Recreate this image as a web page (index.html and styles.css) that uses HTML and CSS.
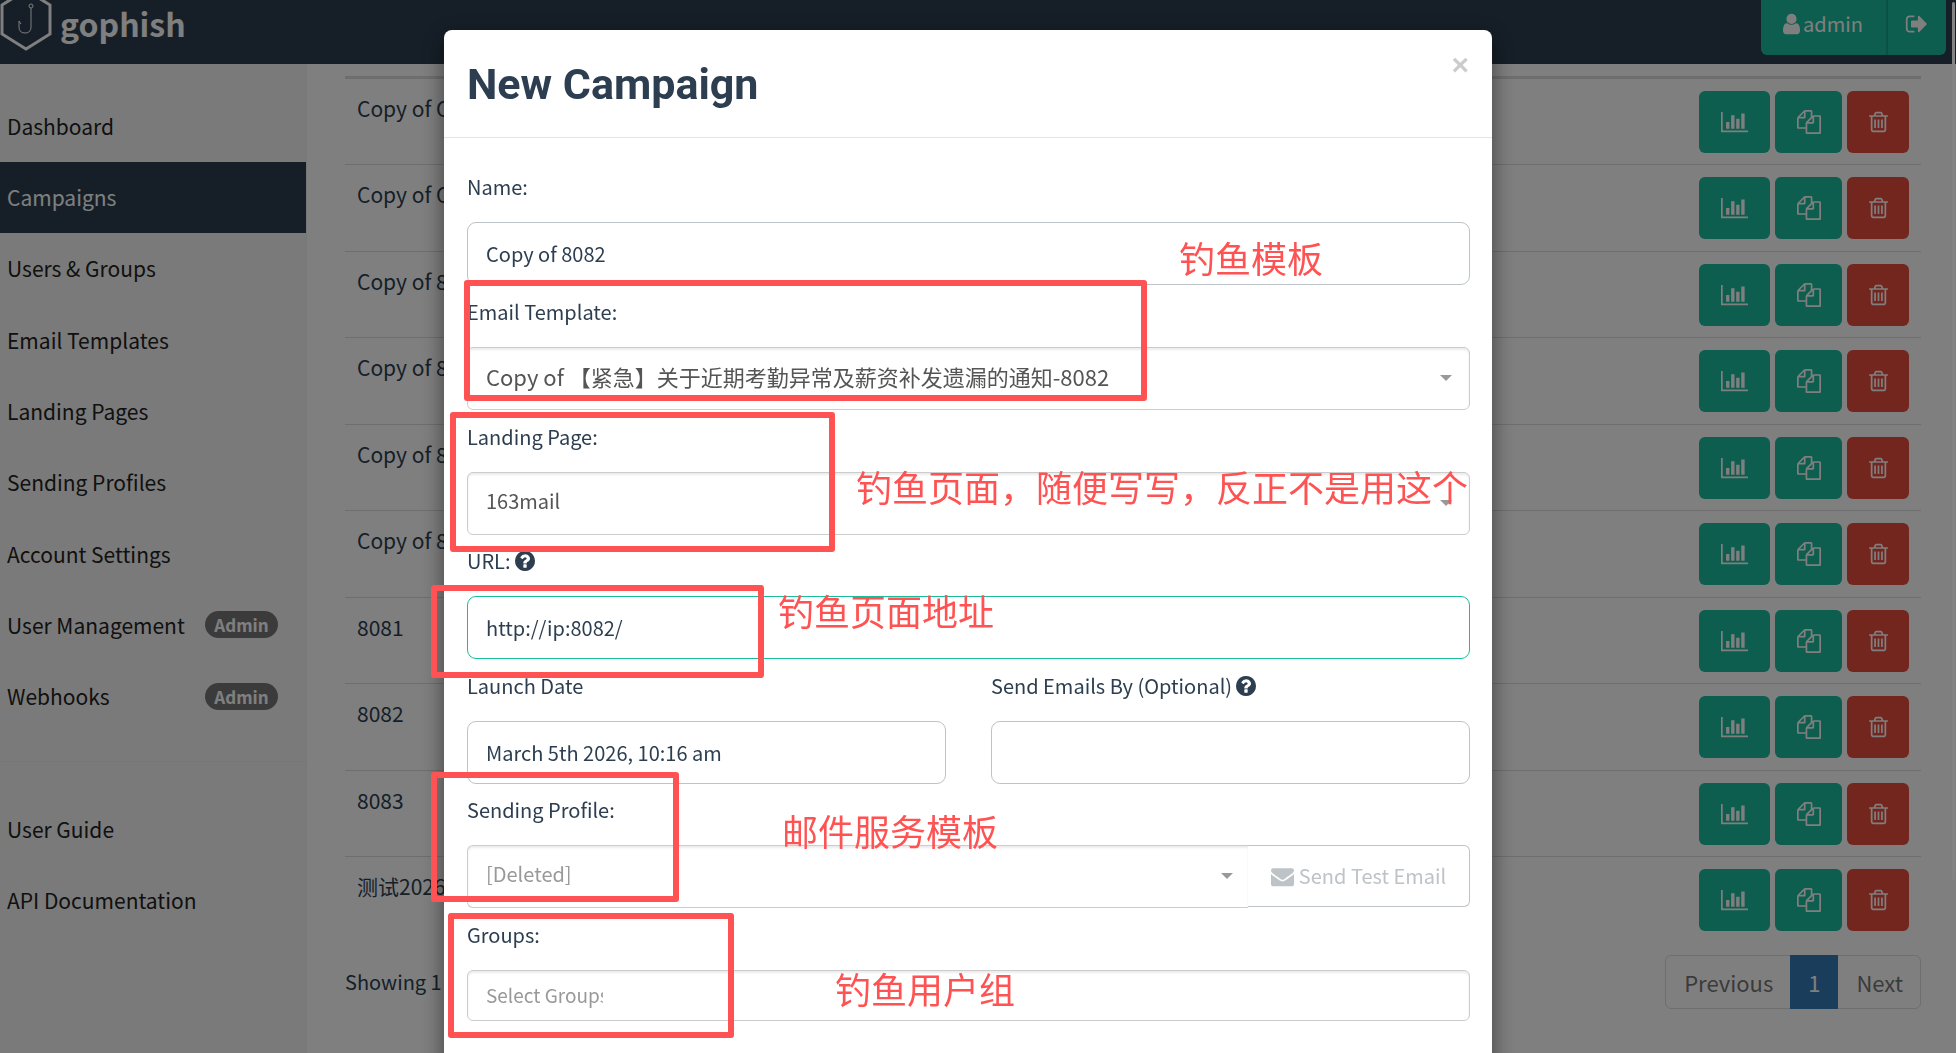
FILE: index.html
```
<!DOCTYPE html>
<html lang="en">
<head>
    <meta charset="UTF-8">
    <meta name="viewport" content="width=device-width, initial-scale=1.0">
    <title>Campaigns - Gophish</title>
    <link rel="stylesheet" href="styles.css">
</head>
<body>
    <!-- Icon sprite -->
    <svg class="sprite" aria-hidden="true">
        <symbol id="i-user" viewBox="256 0 1280 1792"><path d="M1536 1399q0 109-62.5 187t-150.5 78h-854q-88 0-150.5-78t-62.5-187q0-85 8.5-160.5t31.5-152 58.5-131 94-89 134.5-34.5q131 128 313 128t313-128q76 0 134.5 34.5t94 89 58.5 131 31.5 152 8.5 160.5zm-256-887q0 159-112.5 271.5t-271.5 112.5-271.5-112.5-112.5-271.5 112.5-271.5 271.5-112.5 271.5 112.5 112.5 271.5z"/></symbol>
        <symbol id="i-signout" viewBox="0 0 1792 1792"><path d="M704 1440q0 4 1 20t.5 26.5-3 23.5-10 19.5-20.5 6.5h-320q-119 0-203.5-84.5t-84.5-203.5v-704q0-119 84.5-203.5t203.5-84.5h320q13 0 22.5 9.5t9.5 22.5q0 4 1 20t.5 26.5-3 23.5-10 19.5-20.5 6.5h-320q-66 0-113 47t-47 113v704q0 66 47 113t113 47h312l11.5 1 11.5 3 8 5.5 7 9 2 13.5zm928-544q0 26-19 45l-544 544q-19 19-45 19t-45-19-19-45v-288h-448q-26 0-45-19t-19-45v-384q0-26 19-45t45-19h448v-288q0-26 19-45t45-19 45 19l544 544q19 19 19 45z"/></symbol>
        <symbol id="i-chart" viewBox="0 0 2048 1792"><path d="M640 896v512h-256v-512h256zm384-512v1024h-256v-1024h256zm1024 1152v128h-2048v-1536h128v1408h1920zm-640-896v768h-256v-768h256zm384-384v1152h-256v-1152h256z"/></symbol>
        <symbol id="i-copy" viewBox="0 0 1792 1792"><path d="M1696 384q40 0 68 28t28 68v1216q0 40-28 68t-68 28h-960q-40 0-68-28t-28-68v-288h-544q-40 0-68-28t-28-68v-672q0-40 20-88t48-76l408-408q28-28 76-48t88-20h416q40 0 68 28t28 68v328q68-40 128-40h416zm-544 213l-299 299h299v-299zm-640-384l-299 299h299v-299zm196 647l316-316v-416h-384v416q0 40-28 68t-68 28h-416v640h512v-256q0-40 20-88t48-76zm956 804v-1152h-384v416q0 40-28 68t-68 28h-416v640h896z"/></symbol>
        <symbol id="i-trash" viewBox="192 0 1408 1792"><path d="M704 736v576q0 14-9 23t-23 9h-64q-14 0-23-9t-9-23v-576q0-14 9-23t23-9h64q14 0 23 9t9 23zm256 0v576q0 14-9 23t-23 9h-64q-14 0-23-9t-9-23v-576q0-14 9-23t23-9h64q14 0 23 9t9 23zm256 0v576q0 14-9 23t-23 9h-64q-14 0-23-9t-9-23v-576q0-14 9-23t23-9h64q14 0 23 9t9 23zm128 724v-948h-896v948q0 22 7 40.5t14.5 27 10.5 8.5h832q3 0 10.5-8.5t14.5-27 7-40.5zm-672-1076h448l-48-117q-7-9-17-11h-317q-10 2-17 11zm928 32v64q0 14-9 23t-23 9h-96v948q0 83-47 143.5t-113 60.5h-832q-66 0-113-58.5t-47-141.5v-952h-96q-14 0-23-9t-9-23v-64q0-14 9-23t23-9h309l70-167q15-37 54-63t79-26h320q40 0 79 26t54 63l70 167h309q14 0 23 9t9 23z"/></symbol>
        <symbol id="i-help" viewBox="128 128 1536 1536"><path d="M1024 1376v-192q0-14-9-23t-23-9h-192q-14 0-23 9t-9 23v192q0 14 9 23t23 9h192q14 0 23-9t9-23zm256-672q0-88-55.5-163t-138.5-116-170-41q-243 0-371 213-15 24 8 42l132 100q7 6 19 6 16 0 25-12 53-68 86-92 34-24 86-24 48 0 85.5 26t37.5 59q0 38-20 61t-68 45q-63 28-115.5 86.5t-52.5 125.5v36q0 14 9 23t23 9h192q14 0 23-9t9-23q0-19 21.5-49.5t54.5-49.5q32-18 49-28.5t46-35 44.5-48 28-60.5 12.5-81zm384 192q0 209-103 385.5t-279.5 279.5-385.5 103-385.5-103-279.5-279.5-103-385.5 103-385.5 279.5-279.5 385.5-103 385.5 103 279.5 279.5 103 385.5z"/></symbol>
        <symbol id="i-mail" viewBox="0 0 1792 1792"><path d="M1792 710v794q0 66-47 113t-113 47h-1472q-66 0-113-47t-47-113v-794q44 49 101 87 362 246 497 345 57 42 92.5 65.5t94.5 48 110 24.5h2q51 0 110-24.5t94.5-48 92.5-65.5q170-123 498-345 57-39 100-87zm0-294q0 79-49 151t-122 123q-376 261-468 325-10 7-42.5 31t-54 38.5-52 32.5-57.5 27-50 9h-2q-23 0-50-9t-57.5-27-52-32.5-54-38.5-42.5-31q-91-64-262-182.5t-205-142.5q-62-42-117-115.5t-55-136.5q0-78 41.5-130t118.5-52h1472q65 0 112.5 47t47.5 113z"/></symbol>
    </svg>

    <header class="navbar">
        <a href="#" class="brand">
            <svg class="logo" viewBox="0 0 52 62" aria-hidden="true">
                <path d="M26 0L50 15V44L26 59L2 44V15Z" fill="none" stroke="#fff" stroke-width="3"/>
                <circle cx="31" cy="16" r="2" fill="none" stroke="#fff" stroke-width="1"/>
                <path d="M31 18V37Q31 43 25 43Q19 43 19 37V31L21 34" fill="none" stroke="#fff" stroke-width="1"/>
            </svg>
            gophish
        </a>
        <div class="nav-buttons">
            <button class="nav-button"><svg class="icon user"><use href="#i-user"/></svg>admin</button>
            <button class="nav-button logout" aria-label="Logout"><svg class="icon"><use href="#i-signout"/></svg></button>
        </div>
    </header>

    <div class="layout">
        <nav class="sidebar">
            <ul>
                <li><a href="#">Dashboard</a></li>
                <li><a href="#" class="active">Campaigns</a></li>
                <li><a href="#">Users &amp; Groups</a></li>
                <li><a href="#">Email Templates</a></li>
                <li><a href="#">Landing Pages</a></li>
                <li><a href="#">Sending Profiles</a></li>
                <li><a href="#">Account Settings</a></li>
                <li><a href="#">User Management <span class="badge">Admin</span></a></li>
                <li><a href="#">Webhooks <span class="badge">Admin</span></a></li>
            </ul>
            <ul>
                <li><a href="#">User Guide</a></li>
                <li><a href="#">API Documentation</a></li>
            </ul>
        </nav>

        <main class="main">
            <table class="campaigns">
                <tbody>
                    <tr><td>Copy of C</td><td class="actions"><button class="btn chart" aria-label="Results"><svg><use href="#i-chart"/></svg></button><button class="btn copy" aria-label="Copy"><svg><use href="#i-copy"/></svg></button><button class="btn trash" aria-label="Delete"><svg><use href="#i-trash"/></svg></button></td></tr>
                    <tr><td>Copy of C</td><td class="actions"><button class="btn chart" aria-label="Results"><svg><use href="#i-chart"/></svg></button><button class="btn copy" aria-label="Copy"><svg><use href="#i-copy"/></svg></button><button class="btn trash" aria-label="Delete"><svg><use href="#i-trash"/></svg></button></td></tr>
                    <tr><td>Copy of 8</td><td class="actions"><button class="btn chart" aria-label="Results"><svg><use href="#i-chart"/></svg></button><button class="btn copy" aria-label="Copy"><svg><use href="#i-copy"/></svg></button><button class="btn trash" aria-label="Delete"><svg><use href="#i-trash"/></svg></button></td></tr>
                    <tr><td>Copy of 8</td><td class="actions"><button class="btn chart" aria-label="Results"><svg><use href="#i-chart"/></svg></button><button class="btn copy" aria-label="Copy"><svg><use href="#i-copy"/></svg></button><button class="btn trash" aria-label="Delete"><svg><use href="#i-trash"/></svg></button></td></tr>
                    <tr><td>Copy of 8</td><td class="actions"><button class="btn chart" aria-label="Results"><svg><use href="#i-chart"/></svg></button><button class="btn copy" aria-label="Copy"><svg><use href="#i-copy"/></svg></button><button class="btn trash" aria-label="Delete"><svg><use href="#i-trash"/></svg></button></td></tr>
                    <tr><td>Copy of 8</td><td class="actions"><button class="btn chart" aria-label="Results"><svg><use href="#i-chart"/></svg></button><button class="btn copy" aria-label="Copy"><svg><use href="#i-copy"/></svg></button><button class="btn trash" aria-label="Delete"><svg><use href="#i-trash"/></svg></button></td></tr>
                    <tr><td>8081</td><td class="actions"><button class="btn chart" aria-label="Results"><svg><use href="#i-chart"/></svg></button><button class="btn copy" aria-label="Copy"><svg><use href="#i-copy"/></svg></button><button class="btn trash" aria-label="Delete"><svg><use href="#i-trash"/></svg></button></td></tr>
                    <tr><td>8082</td><td class="actions"><button class="btn chart" aria-label="Results"><svg><use href="#i-chart"/></svg></button><button class="btn copy" aria-label="Copy"><svg><use href="#i-copy"/></svg></button><button class="btn trash" aria-label="Delete"><svg><use href="#i-trash"/></svg></button></td></tr>
                    <tr><td>8083</td><td class="actions"><button class="btn chart" aria-label="Results"><svg><use href="#i-chart"/></svg></button><button class="btn copy" aria-label="Copy"><svg><use href="#i-copy"/></svg></button><button class="btn trash" aria-label="Delete"><svg><use href="#i-trash"/></svg></button></td></tr>
                    <tr><td>测试2026</td><td class="actions"><button class="btn chart" aria-label="Results"><svg><use href="#i-chart"/></svg></button><button class="btn copy" aria-label="Copy"><svg><use href="#i-copy"/></svg></button><button class="btn trash" aria-label="Delete"><svg><use href="#i-trash"/></svg></button></td></tr>
                </tbody>
            </table>
            <div class="table-footer">
                <span class="info">Showing 1</span>
                <div class="pagination">
                    <a href="#">Previous</a>
                    <a href="#" class="current">1</a>
                    <a href="#">Next</a>
                </div>
            </div>
        </main>
    </div>

    <!-- New campaign modal -->
    <div class="backdrop">
        <div class="modal" role="dialog" aria-labelledby="modalTitle">
            <div class="modal-header">
                <h4 id="modalTitle">New Campaign</h4>
                <button class="close" aria-label="Close">×</button>
            </div>
            <form class="modal-body">
                <div class="group">
                    <label for="name">Name:</label>
                    <input type="text" id="name" class="control" value="Copy of 8082">
                </div>
                <div class="group">
                    <label for="template">Email Template:</label>
                    <div class="select">
                        <select id="template"><option>Copy of 【紧急】关于近期考勤异常及薪资补发遗漏的通知-8082</option></select>
                    </div>
                </div>
                <div class="group">
                    <label for="page">Landing Page:</label>
                    <div class="select">
                        <select id="page"><option>163mail</option></select>
                    </div>
                </div>
                <div class="group">
                    <label for="url">URL: <svg class="help"><use href="#i-help"/></svg></label>
                    <input type="text" id="url" class="control focused" value="http://ip:8082/">
                </div>
                <div class="columns">
                    <div class="group">
                        <label for="launch">Launch Date</label>
                        <input type="text" id="launch" class="control" value="March 5th 2026, 10:16 am">
                    </div>
                    <div class="group">
                        <label for="sendBy">Send Emails By (Optional) <svg class="help"><use href="#i-help"/></svg></label>
                        <input type="text" id="sendBy" class="control">
                    </div>
                </div>
                <div class="group">
                    <label for="profile">Sending Profile:</label>
                    <div class="input-group">
                        <div class="select joined">
                            <select id="profile" class="muted"><option>[Deleted]</option></select>
                        </div>
                        <button type="button" class="test-email"><svg><use href="#i-mail"/></svg>Send Test Email</button>
                    </div>
                </div>
                <div class="group">
                    <label for="groups">Groups:</label>
                    <div class="tags">
                        <input type="text" id="groups" placeholder="Select Groups">
                    </div>
                </div>
            </form>

            <!-- Markup drawn over the form -->
            <div class="mark mark-template"></div>
            <div class="mark mark-page"></div>
            <div class="mark mark-url"></div>
            <div class="mark mark-profile"></div>
            <div class="mark mark-groups"></div>
            <p class="note note-template">钓鱼模板</p>
            <p class="note note-page">钓鱼页面，随便写写，反正不是用这个</p>
            <p class="note note-url">钓鱼页面地址</p>
            <p class="note note-profile">邮件服务模板</p>
            <p class="note note-groups">钓鱼用户组</p>
        </div>
    </div>
    <div class="scroll-thumb"></div>
</body>
</html>
```
FILE: styles.css
```
* {
    box-sizing: border-box;
}

body {
    margin: 0;
    height: 100vh;
    overflow: hidden;
    background: #fff;
    color: #2c3e50;
    font-family: "Noto Sans CJK SC", sans-serif;
    font-size: 21px;
    line-height: 32px;
}

a {
    color: inherit;
    text-decoration: none;
}

button,
input,
select {
    font: inherit;
    color: inherit;
}

button {
    border: none;
    cursor: pointer;
}

svg {
    fill: currentColor;
}

.sprite {
    display: none;
}

/* Top bar */
.navbar {
    display: flex;
    justify-content: space-between;
    align-items: flex-start;
    height: 64px;
    padding-right: 10px;
    background: #2c3e50;
    color: #fff;
}

.brand {
    display: flex;
    align-items: center;
    gap: 8px;
    height: 46px;
    font-size: 32px;
    font-weight: bold;
}

.logo {
    width: 52px;
    height: 62px;
    margin-top: -4px;
}

.nav-buttons {
    display: flex;
}

.nav-button {
    display: flex;
    align-items: center;
    gap: 3px;
    height: 55px;
    padding: 0 23px 7px 22px;
    background: #1abc9c;
    color: #fff;
    font-size: 20px;
    border-radius: 0 0 0 6px;
}

.nav-button.logout {
    padding: 0 17px 7px 17px;
    border-left: 2px solid #18a589;
    border-radius: 0 0 6px 0;
}

.icon {
    width: 24px;
    height: 24px;
}

.icon.user {
    width: 17px;
}

/* Page columns */
.layout {
    display: flex;
    min-height: calc(100vh - 64px);
}

.sidebar {
    width: 307px;
    padding-top: 27px;
    background: #f5f5f5;
    border-right: 1px solid #eee;
    color: #222;
}

.sidebar ul {
    margin: 0;
    padding: 0 0 28px;
    list-style: none;
}

.sidebar ul + ul {
    padding-top: 32px;
    border-top: 1px solid #eee;
}

.sidebar a {
    display: flex;
    justify-content: space-between;
    align-items: center;
    height: 71px;
    padding: 0 28px 2px 7px;
}

.sidebar li:nth-child(3n) a {
    height: 72px;
}

.sidebar a.active {
    background: #2c3e50;
    color: #fff;
}

.badge {
    width: 73px;
    border-radius: 14px;
    background: #777;
    color: #fff;
    font-size: 17px;
    font-weight: bold;
    line-height: 27px;
    text-align: center;
}

.main {
    flex: 1;
    padding: 12px 35px 0 38px;
}

/* Campaign list */
.campaigns {
    width: 100%;
    border-top: 3px solid #ddd;
    border-spacing: 0;
}

.campaigns tr {
    height: 86px;
}

.campaigns tr:nth-child(even) {
    height: 87px;
}

.campaigns tr:first-child {
    height: 85px;
}

.campaigns td {
    padding: 13px 12px 0;
    border-top: 1px solid #ddd;
    vertical-align: top;
}

.campaigns tr:first-child td {
    border-top: none;
}

.campaigns .actions {
    display: flex;
    justify-content: flex-end;
    gap: 5px;
    padding-top: 12px;
}

.btn {
    display: flex;
    align-items: center;
    justify-content: center;
    height: 62px;
    border-radius: 6px;
    background: #1abc9c;
    color: #fff;
    padding: 0;
}

.btn svg {
    height: 24px;
}

.btn.chart {
    width: 71px;
}

.btn.chart svg {
    width: 27px;
}

.btn.copy {
    width: 67px;
}

.btn.copy svg {
    width: 24px;
}

.btn.trash {
    width: 62px;
    background: #e74c3c;
}

.btn.trash svg {
    width: 19px;
}

.table-footer {
    display: flex;
    justify-content: space-between;
    align-items: center;
    padding-top: 12px;
}

.info {
    font-size: 20px;
}

.pagination {
    display: flex;
    border: 1px solid #ddd;
    border-radius: 6px;
    color: #777;
    font-size: 22px;
}

.pagination a {
    padding: 10px 17px 10px 18px;
}

.pagination a.current {
    margin: -1px 0;
    padding: 11px 18px;
    background: #337ab7;
    color: #fff;
}

/* Modal */
.backdrop {
    position: fixed;
    inset: 0;
    overflow: hidden;
    padding: 30px 20px 0 0;
    background: rgba(0, 0, 0, 0.5);
}

.modal {
    position: relative;
    max-width: 1048px;
    margin: 0 auto;
    background: #fff;
    border-radius: 8px;
    box-shadow: 0 7px 22px rgba(0, 0, 0, 0.5);
    font-size: 20px;
    line-height: 30px;
}

.modal-header {
    display: flex;
    justify-content: space-between;
    align-items: flex-start;
    height: 108px;
    padding: 22px 23px;
    border-bottom: 1px solid #e5e5e5;
}

.modal-header h4 {
    margin: 0;
    font-family: Roboto, sans-serif;
    font-size: 43px;
    font-weight: bold;
    line-height: 64px;
}

.close {
    padding: 0;
    background: none;
    color: #ccc;
    font-family: "Liberation Sans", sans-serif;
    font-size: 30px;
    font-weight: bold;
    line-height: 26px;
}

.modal-body {
    padding: 22px 22px 90px 23px;
}

.group {
    padding-top: 12px;
}

.modal-body > :nth-child(even) {
    margin-top: -1px;
}

.modal-body > :nth-child(2) {
    margin-top: 0;
}

.group label {
    display: flex;
    align-items: center;
    gap: 4px;
    margin-bottom: 20px;
}

.help {
    width: 20px;
    height: 20px;
}

.control {
    display: block;
    width: 100%;
    height: 63px;
    padding: 0 18px;
    border: 1px solid #bdc3c7;
    border-radius: 9px;
    background: #fff;
    outline: none;
}

.control.focused {
    border-color: #1abc9c;
}

.select {
    position: relative;
    flex: 1;
    border: 1px solid #ccc;
    border-radius: 6px;
    box-shadow: inset 0 2px 2px rgba(0, 0, 0, 0.08);
}

.select::after {
    content: "";
    position: absolute;
    right: 17px;
    top: 27px;
    border: 6px solid transparent;
    border-top-color: #999;
    border-bottom: none;
}

.select.joined {
    border-right: none;
    border-radius: 6px 0 0 6px;
}

.select.joined::after {
    right: 15px;
}

.select select {
    display: block;
    width: 100%;
    height: 61px;
    padding: 0 18px 6px;
    border: none;
    background: none;
    color: #555;
    appearance: none;
}

.select select.muted {
    color: #999;
}

/* Long Chinese template names read better a little larger */
#template {
    font-size: 22px;
}

.columns {
    display: grid;
    grid-template-columns: 1fr 1fr;
    gap: 45px;
}

.input-group {
    display: flex;
    align-items: flex-start;
}

.test-email {
    display: flex;
    align-items: center;
    justify-content: center;
    gap: 5px;
    width: 222px;
    height: 62px;
    padding: 0;
    border: 1px solid #bdc3c7;
    border-left: none;
    border-radius: 0 6px 6px 0;
    background: #fff;
    color: #bdc3c7;
}

.test-email svg {
    width: 23px;
    height: 23px;
}

.tags {
    height: 51px;
    padding: 3px 18px;
    border: 1px solid #ccc;
    border-radius: 6px;
    box-shadow: inset 0 2px 2px rgba(0, 0, 0, 0.08);
}

.tags input {
    width: 117px;
    height: 41px;
    padding: 0;
    border: none;
    background: none;
    font-size: 19px;
}

.tags input::placeholder {
    color: #999;
}

/* Red boxes and notes over the form */
.mark {
    position: absolute;
    border: 6px solid #ff5252;
    border-radius: 3px;
}

.mark-template {
    left: 20px;
    top: 250px;
    width: 683px;
    height: 121px;
}

.mark-page {
    left: 6px;
    top: 382px;
    width: 385px;
    height: 140px;
}

.mark-url {
    left: -13px;
    top: 555px;
    width: 333px;
    height: 93px;
}

.mark-profile {
    left: -13px;
    top: 742px;
    width: 248px;
    height: 130px;
}

.mark-groups {
    left: 4px;
    top: 883px;
    width: 286px;
    height: 125px;
}

.note {
    position: absolute;
    margin: 0;
    color: #ff5252;
    font-size: 36px;
    line-height: 48px;
    white-space: nowrap;
}

.note-template {
    left: 735px;
    top: 203px;
}

.note-page {
    left: 412px;
    top: 432px;
}

.note-url {
    left: 334px;
    top: 556px;
}

.note-profile {
    left: 338px;
    top: 776px;
}

.note-groups {
    left: 391px;
    top: 934px;
}

.scroll-thumb {
    position: fixed;
    top: 2px;
    right: 1px;
    width: 3px;
    height: 878px;
    border-radius: 2px;
    background: #848484;
}
```
